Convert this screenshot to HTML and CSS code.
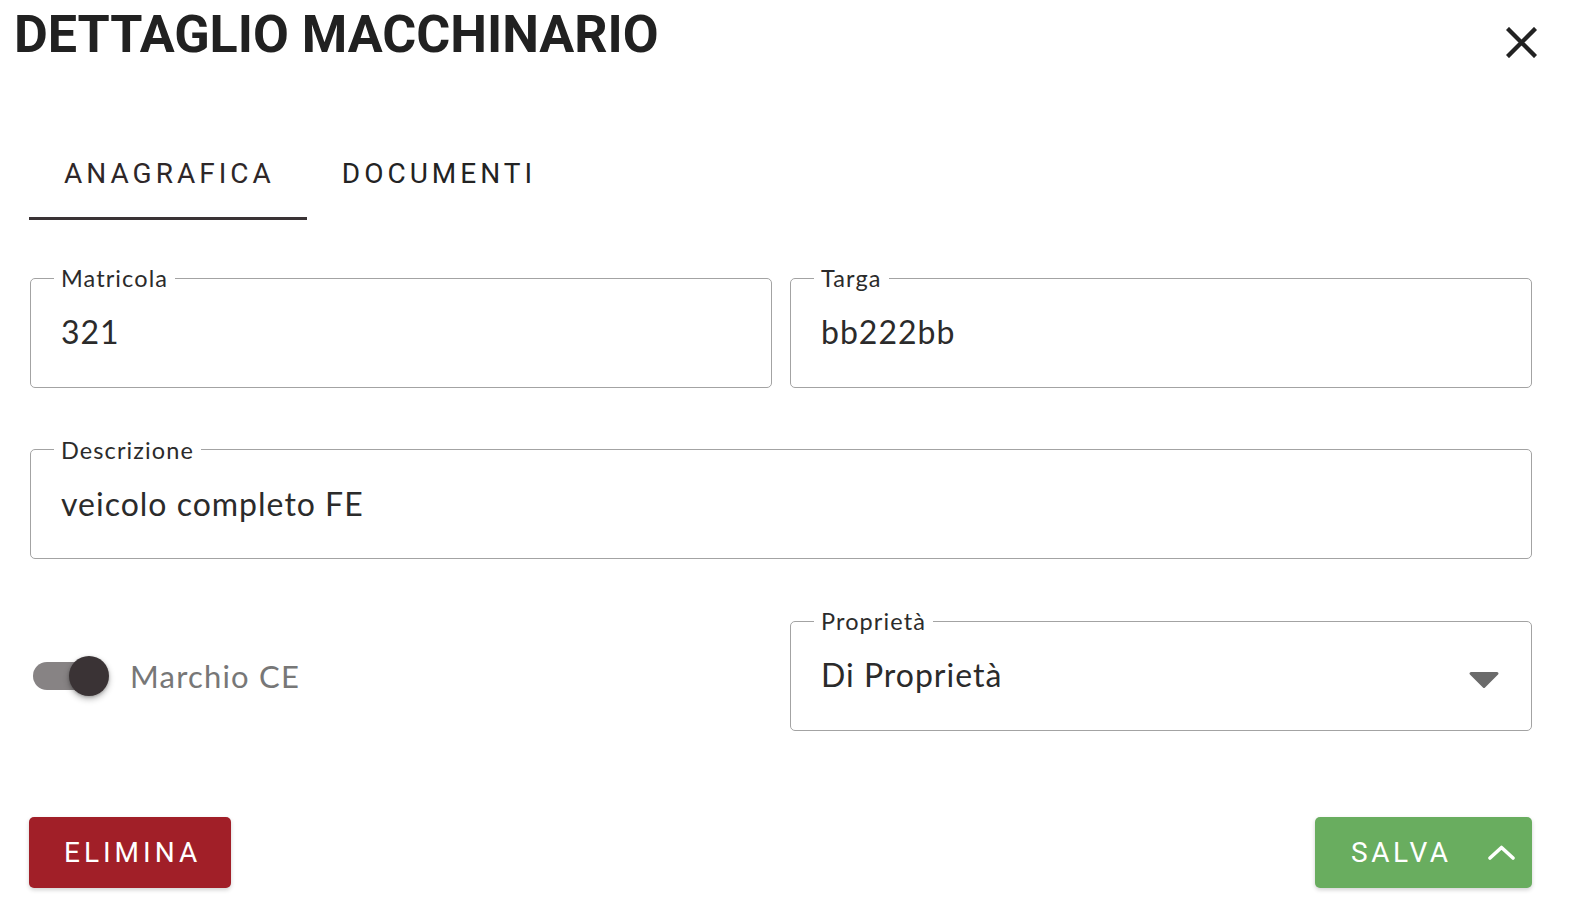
FILE: index.html
```html
<!DOCTYPE html>
<html lang="it">
<head>
<meta charset="utf-8">
<title>Dettaglio macchinario</title>
<link rel="stylesheet" href="styles.css">
</head>
<body>
<div class="dialog">
  <header class="header">
    <h1 class="title">DETTAGLIO MACCHINARIO</h1>
    <button class="close" aria-label="Chiudi">
      <svg width="31" height="31" viewBox="0 0 31 31"><path d="M3 3 L28 28 M28 3 L3 28" stroke="#222" stroke-width="4.4" stroke-linecap="square" fill="none"/></svg>
    </button>
  </header>

  <nav class="tabs">
    <div class="tab active">ANAGRAFICA</div>
    <div class="tab">DOCUMENTI</div>
  </nav>

  <div class="fields">
    <fieldset class="field">
      <legend class="label">Matricola</legend>
      <div class="value">321</div>
    </fieldset>
    <fieldset class="field">
      <legend class="label">Targa</legend>
      <div class="value">bb222bb</div>
    </fieldset>
    <fieldset class="field wide">
      <legend class="label">Descrizione</legend>
      <div class="value">veicolo completo FE</div>
    </fieldset>
    <div class="switch-row">
      <div class="switch">
        <span class="track"></span>
        <span class="thumb"></span>
      </div>
      <span class="switch-label">Marchio CE</span>
    </div>
    <fieldset class="field">
      <legend class="label">Proprietà</legend>
      <div class="value select">
        <span>Di Proprietà</span>
        <svg class="arrow" width="32" height="18" viewBox="0 0 32 18"><path d="M3 2.5 L29 2.5 L16 15.5 Z" fill="#6b6b6b" stroke="#6b6b6b" stroke-width="3" stroke-linejoin="round"/></svg>
      </div>
    </fieldset>
  </div>

  <div class="actions">
    <button class="btn danger">ELIMINA</button>
    <button class="btn success">SALVA
      <svg class="chev" width="27" height="15" viewBox="0 0 27 15"><path d="M2 13 L13.5 2.5 L25 13" stroke="#fff" stroke-width="3.6" stroke-linecap="round" stroke-linejoin="round" fill="none"/></svg>
    </button>
  </div>
</div>
</body>
</html>
```

FILE: styles.css
```css
* { box-sizing: border-box; }

html, body {
  margin: 0;
  padding: 0;
  background: #ffffff;
}

body {
  font-family: "Lato", "Roboto", "Liberation Sans", sans-serif;
  color: #2b2b2b;
}

.dialog {
  width: 1578px;
  height: 924px;
  padding: 5px 0 0 0;
}

.header {
  display: flex;
  justify-content: space-between;
  align-items: flex-start;
  padding: 0 41px 0 14px;
}

.title {
  margin: 0;
  font-family: "Roboto", "Liberation Sans", sans-serif;
  font-weight: 700;
  font-size: 52px;
  line-height: 60px;
  color: #212121;
  letter-spacing: 0;
}

.close {
  margin-top: 22px;
  padding: 0;
  border: 0;
  background: none;
  width: 31px;
  height: 31px;
  display: block;
}
.close svg { display: block; }

.tabs {
  display: flex;
  margin: 59px 0 0 29px;
}

.tab {
  font-family: "Roboto", "Liberation Sans", sans-serif;
  font-weight: 400;
  font-size: 28px;
  line-height: 32px;
  letter-spacing: 4px;
  color: #232323;
  padding: 34px 32px 27px 35px;
  border-bottom: 3px solid transparent;
}

.tab.active {
  color: #2e2729;
  border-bottom-color: #3a3335;
}

.fields {
  display: grid;
  grid-template-columns: 1fr 1fr;
  column-gap: 18px;
  row-gap: 50px;
  margin: 46px 46px 0 30px;
}

.field {
  margin: 0;
  min-width: 0;
  padding: 0 23px;
  border: 1.5px solid #a3a3a3;
  border-radius: 5px;
}

.field.wide { grid-column: 1 / span 2; }

.label {
  padding: 0 7px;
  font-size: 23.5px;
  letter-spacing: 1.1px;
  line-height: 24px;
  color: #2b2b2b;
}

.value {
  padding: 22px 7px 34.5px 7px;
  font-size: 32px;
  letter-spacing: 1px;
  line-height: 40px;
  color: #2b2b2b;
}

.select {
  display: flex;
  justify-content: space-between;
  align-items: center;
  padding-right: 8px;
}
.arrow { display: block; margin-top: 10px; }

.switch-row {
  display: flex;
  align-items: center;
  padding-top: 12px;
  padding-left: 3px;
}

.switch {
  position: relative;
  width: 76px;
  height: 40px;
  display: flex;
  align-items: center;
}

.track {
  display: block;
  width: 68px;
  height: 28px;
  border-radius: 14px;
  background: #878384;
}

.thumb {
  position: absolute;
  right: 0;
  top: 0;
  width: 40px;
  height: 40px;
  border-radius: 50%;
  background: #3a3335;
  box-shadow: 0 3px 6px rgba(0,0,0,0.28), 0 1px 3px rgba(0,0,0,0.2);
}

.switch-label {
  margin-left: 21px;
  font-size: 31px;
  letter-spacing: 1.2px;
  color: #777777;
}

.actions {
  display: flex;
  justify-content: space-between;
  margin: 86px 46px 0 29px;
}

.btn {
  height: 71px;
  border: 0;
  border-radius: 5px;
  font-family: "Roboto", "Liberation Sans", sans-serif;
  font-weight: 400;
  font-size: 28px;
  letter-spacing: 4px;
  color: #ffffff;
  display: flex;
  align-items: center;
  box-shadow: 0 2px 4px rgba(0,0,0,0.18);
}

.danger {
  width: 202px;
  padding: 0 0 0 35px;
  background: #a11f28;
}

.success {
  width: 217px;
  padding: 0 0 0 36px;
  background: #69ad5f;
  letter-spacing: 3.6px;
}

.chev {
  display: block;
  margin-left: 36px;
}
```
